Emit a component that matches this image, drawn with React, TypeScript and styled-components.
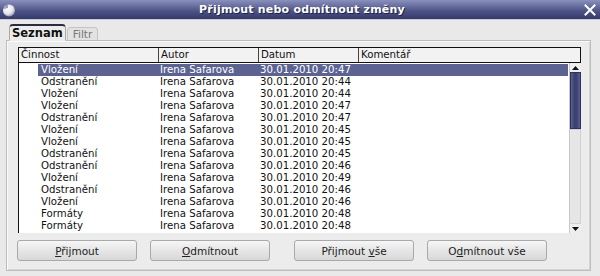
import React from "react";
import styled, { createGlobalStyle } from "styled-components";

const Global = createGlobalStyle`
  html, body { margin: 0; padding: 0; background: #e8e8e8; }
  body { width: 600px; height: 276px; overflow: hidden; font-family: "DejaVu Sans", Verdana, sans-serif; }
`;

const Window = styled.div`
  width: 600px;
  height: 276px;
  display: flex;
  flex-direction: column;
  background: #e9e9e9;
  box-sizing: border-box;
`;

const TitleBar = styled.div`
  height: 20px;
  flex: none;
  display: flex;
  align-items: center;
  justify-content: space-between;
  padding: 0 4px 0 2px;
  background: linear-gradient(#8a90bd 0%, #6a709f 30%, #4b5183 60%, #353a6a 100%);
  border-bottom: 1px solid #c9cbdc;
  box-sizing: border-box;
`;

const TitleText = styled.div`
  flex: 1;
  text-align: center;
  color: #fff;
  font-weight: bold;
  font-size: 11px;
  letter-spacing: 0.2px;
  text-shadow: 1px 1px 0 #1e2244;
  margin-left: 4px;
`;

const AppIcon = styled.svg`
  width: 14px;
  height: 14px;
  flex: none;
`;

const CloseIcon = styled.svg`
  width: 12px;
  height: 12px;
  flex: none;
`;

const Body = styled.div`
  flex: 1;
  display: flex;
  flex-direction: column;
  padding: 4px 9px 5px 6px;
`;

const TabBar = styled.div`
  display: flex;
  align-items: flex-end;
  height: 17px;
  padding-left: 3px;
  position: relative;
  z-index: 1;
  margin-bottom: -1px;
`;

const Tab = styled.div<{ $active?: boolean }>`
  box-sizing: border-box;
  height: ${(p) => (p.$active ? "17px" : "14px")};
  padding: 0 ${(p) => (p.$active ? "2px" : "5px")};
  font-size: ${(p) => (p.$active ? "11.5px" : "10.5px")};
  font-weight: ${(p) => (p.$active ? "bold" : "normal")};
  color: ${(p) => (p.$active ? "#111" : "#777")};
  background: ${(p) => (p.$active ? "#ececec" : "#e2e2e2")};
  border: 1px solid ${(p) => (p.$active ? "#a8a8a8" : "#c4c4c4")};
  border-top: ${(p) => (p.$active ? "2px solid #2a2d40" : "1px solid #c4c4c4")};
  border-bottom: ${(p) => (p.$active ? "1px solid #ececec" : "1px solid #bcbcbc")};
  border-radius: 4px 4px 0 0;
  display: flex;
  align-items: center;
  margin-right: 1px;
`;

const Panel = styled.div`
  flex: 1;
  display: flex;
  flex-direction: column;
  border: 1px solid #bdbdbd;
  box-shadow: inset 1px 1px 0 #fafafa, inset -1px -1px 0 #d6d6d6;
  background: #ececec;
  padding: 6px 9px 9px 11px;
`;

const Table = styled.div`
  display: flex;
  flex-direction: column;
  height: 186px;
`;

const Header = styled.div`
  display: grid;
  grid-template-columns: 140px 100px 100px 1fr;
  height: 16px;
  box-sizing: border-box;
  border: 1px solid #111;
  background: #f2f2f2;
  flex: none;
`;

const HeadCell = styled.div<{ $last?: boolean }>`
  font-size: 10.2px;
  color: #111;
  line-height: 14px;
  padding-left: 2px;
  border-right: ${(p) => (p.$last ? "none" : "1px solid #444")};
  white-space: nowrap;
  overflow: hidden;
`;

const ListArea = styled.div`
  flex: 1;
  display: flex;
  background: #fff;
  border-left: 1px solid #111;
  min-height: 0;
`;

const Rows = styled.div`
  flex: 1;
  display: flex;
  flex-direction: column;
  padding: 1px 1px 0 19px;
`;

const Row = styled.div<{ $selected?: boolean }>`
  display: grid;
  grid-template-columns: 120px 100px 100px 1fr;
  height: 12px;
  align-items: center;
  background: ${(p) => (p.$selected ? "#5c6391" : "transparent")};
  color: ${(p) => (p.$selected ? "#fff" : "#111")};
  font-size: 10.2px;
  line-height: 12px;
`;

const Cell = styled.div<{ $pad?: number }>`
  padding-left: ${(p) => p.$pad ?? 2}px;
  white-space: nowrap;
  overflow: hidden;
`;

const ScrollBar = styled.div`
  width: 12px;
  flex: none;
  display: flex;
  flex-direction: column;
  background: #e4e4e4;
  border-left: 1px solid #c8c8c8;
  box-sizing: border-box;
`;

const ArrowBtn = styled.div`
  height: 9px;
  flex: none;
  display: flex;
  align-items: center;
  justify-content: center;
  background: #eeeeee;
`;

const Thumb = styled.div`
  height: 57px;
  flex: none;
  background: linear-gradient(90deg, #5a6090 0%, #3a4070 40%, #3a4070 60%, #5a6090 100%);
  border: 1px solid #2c3160;
  box-sizing: border-box;
`;

const Track = styled.div`
  flex: 1;
  background: #e6e6e6;
  border: 1px solid #d2d2d2;
  border-left: none;
`;

const ButtonRow = styled.div`
  display: flex;
  gap: 24px;
  margin-top: 7px;
  margin-left: -1px;
`;

const ButtonGroup = styled.div`
  display: flex;
  gap: 13px;
`;

const Button = styled.button`
  width: 120px;
  height: 21px;
  box-sizing: border-box;
  border: 1px solid #a9a9a9;
  border-radius: 3px;
  background: linear-gradient(#f6f6f6 0%, #e6e6e6 50%, #d8d8d8 100%);
  font-family: "DejaVu Sans", Verdana, sans-serif;
  font-size: 10.5px;
  color: #222;
  padding: 0;
  text-align: center;
  white-space: pre;
  & u { text-decoration: underline; text-underline-offset: 1px; }
`;

const rows: [string, string][] = [
  ["Vložení", "47"],
  ["Odstranění", "44"],
  ["Vložení", "44"],
  ["Vložení", "47"],
  ["Odstranění", "47"],
  ["Vložení", "45"],
  ["Vložení", "45"],
  ["Odstranění", "45"],
  ["Odstranění", "46"],
  ["Vložení", "49"],
  ["Odstranění", "46"],
  ["Vložení", "46"],
  ["Formáty", "48"],
  ["Formáty", "48"],
];

export default function App() {
  return (
    <>
      <Global />
      <Window>
        <TitleBar>
          <AppIcon viewBox="0 0 14 14">
            <defs>
              <radialGradient id="ig" cx="0.4" cy="0.35" r="0.7">
                <stop offset="0" stopColor="#ffffff" />
                <stop offset="0.6" stopColor="#e4e4ea" />
                <stop offset="1" stopColor="#8a8fae" />
              </radialGradient>
            </defs>
            <circle cx="7" cy="7.5" r="6" fill="url(#ig)" />
            <path d="M1.5 6 A6 6 0 0 1 6 1.6 L6 5 Z" fill="#9aa0c2" />
          </AppIcon>
          <TitleText>Přijmout nebo odmítnout změny</TitleText>
          <CloseIcon viewBox="0 0 12 12">
            <path d="M1.5 1.5 L10.5 10.5 M10.5 1.5 L1.5 10.5" stroke="#fff" strokeWidth="2" strokeLinecap="square" />
          </CloseIcon>
        </TitleBar>
        <Body>
          <TabBar>
            <Tab $active>Seznam</Tab>
            <Tab>Filtr</Tab>
          </TabBar>
          <Panel>
            <Table>
              <Header>
                <HeadCell>Činnost</HeadCell>
                <HeadCell>Autor</HeadCell>
                <HeadCell>Datum</HeadCell>
                <HeadCell $last>Komentář</HeadCell>
              </Header>
              <ListArea>
                <Rows>
                  {rows.map(([a, m], i) => (
                    <Row key={i} $selected={i === 0}>
                      <Cell $pad={3}>{a}</Cell>
                      <Cell>Irena Safarova</Cell>
                      <Cell>30.01.2010 20:{m}</Cell>
                      <Cell />
                    </Row>
                  ))}
                </Rows>
                <ScrollBar>
                  <ArrowBtn>
                    <svg width="7" height="4" viewBox="0 0 7 4"><path d="M0 4 L3.5 0 L7 4 Z" fill="#111" /></svg>
                  </ArrowBtn>
                  <Thumb />
                  <Track />
                  <ArrowBtn>
                    <svg width="7" height="4" viewBox="0 0 7 4"><path d="M0 0 L3.5 4 L7 0 Z" fill="#111" /></svg>
                  </ArrowBtn>
                </ScrollBar>
              </ListArea>
            </Table>
            <ButtonRow>
              <ButtonGroup>
                <Button><u>P</u>řijmout</Button>
                <Button><u>O</u>dmítnout</Button>
              </ButtonGroup>
              <ButtonGroup>
                <Button>{"Přijmout "}<u>v</u>še</Button>
                <Button>O<u>d</u>mítnout vše</Button>
              </ButtonGroup>
            </ButtonRow>
          </Panel>
        </Body>
      </Window>
    </>
  );
}
